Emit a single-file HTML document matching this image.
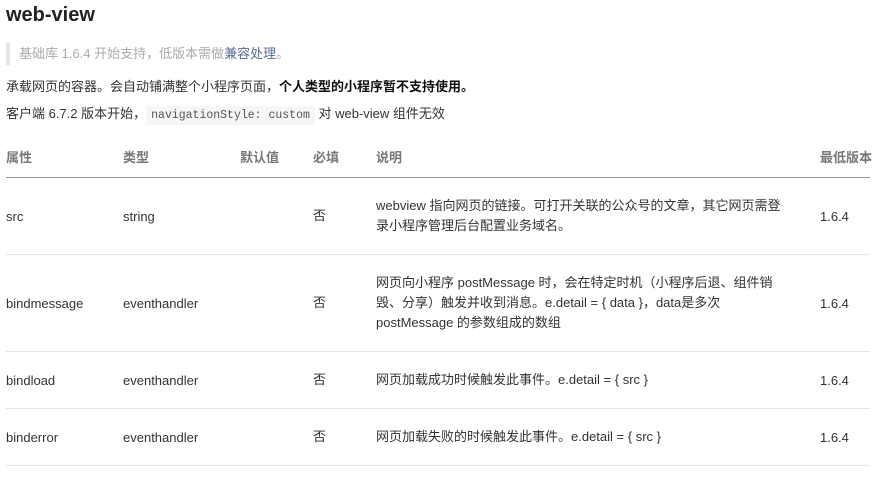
<!DOCTYPE html>
<html><head><meta charset="utf-8"><style>
body{margin:0;background:#fff;font-family:"Liberation Sans","Noto Sans CJK SC",sans-serif;color:#333;font-size:13px;width:884px;height:477px;overflow:hidden;position:relative}
.a{position:absolute;white-space:nowrap;line-height:20px}
h1{position:absolute;left:6px;top:4px;margin:0;font-size:20px;font-weight:bold;color:#222}
.bq{position:absolute;left:6px;top:43px;height:22px;border-left:4px solid #e6e6e6;padding-left:9px;color:#aaa;line-height:22px}
code{font-family:"Liberation Mono",monospace;font-size:11.5px;background:#f6f6f6;color:#555;padding:3px 5px}
.hd{color:#777;font-weight:bold;top:148px}
.ln{position:absolute;left:6px;width:864px;height:1px;background:#e5e5e5}
.d{white-space:normal;width:406px}
.c{top:0}
</style></head><body>
<h1>web-view</h1>
<div class="bq">基础库 1.6.4 开始支持，低版本需做<span style="color:#576b95">兼容处理</span>。</div>
<div class="a" style="left:6px;top:77px">承载网页的容器。会自动铺满整个小程序页面，<b style="color:#111">个人类型的小程序暂不支持使用。</b></div>
<div class="a" style="left:6px;top:104px">客户端 6.7.2 版本开始，<code>navigationStyle: custom</code> 对 web-view 组件无效</div>
<div class="a hd" style="left:6px">属性</div><div class="a hd" style="left:123px">类型</div><div class="a hd" style="left:240px">默认值</div><div class="a hd" style="left:313px">必填</div><div class="a hd" style="left:376px">说明</div><div class="a hd" style="left:820px">最低版本</div>
<div class="ln" style="top:177px;background:#999"></div>
<div class="a" style="left:6px;top:207px">src</div><div class="a" style="left:123px;top:207px">string</div><div class="a" style="left:313px;top:206px">否</div><div class="a d" style="left:376px;top:196px">webview 指向网页的链接。可打开关联的公众号的文章，其它网页需登录小程序管理后台配置业务域名。</div><div class="a" style="left:820px;top:207px">1.6.4</div>
<div class="ln" style="top:254px"></div>
<div class="a" style="left:6px;top:294px">bindmessage</div><div class="a" style="left:123px;top:294px">eventhandler</div><div class="a" style="left:313px;top:293px">否</div><div class="a d" style="left:376px;top:273px">网页向小程序 postMessage 时，会在特定时机（小程序后退、组件销毁、分享）触发并收到消息。e.detail = { data }，data是多次 postMessage 的参数组成的数组</div><div class="a" style="left:820px;top:294px">1.6.4</div>
<div class="ln" style="top:351px"></div>
<div class="a" style="left:6px;top:371px">bindload</div><div class="a" style="left:123px;top:371px">eventhandler</div><div class="a" style="left:313px;top:370px">否</div><div class="a" style="left:376px;top:370px">网页加载成功时候触发此事件。e.detail = { src }</div><div class="a" style="left:820px;top:371px">1.6.4</div>
<div class="ln" style="top:408px"></div>
<div class="a" style="left:6px;top:428px">binderror</div><div class="a" style="left:123px;top:428px">eventhandler</div><div class="a" style="left:313px;top:427px">否</div><div class="a" style="left:376px;top:427px">网页加载失败的时候触发此事件。e.detail = { src }</div><div class="a" style="left:820px;top:428px">1.6.4</div>
<div class="ln" style="top:465px"></div>
</body></html>
